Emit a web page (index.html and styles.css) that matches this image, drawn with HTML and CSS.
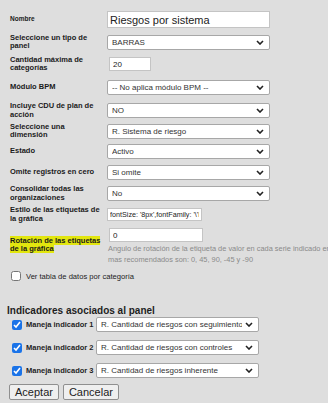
FILE: index.html
```html
<!DOCTYPE html>
<html lang="es">
<head>
  <meta charset="UTF-8">
  <meta name="viewport" content="width=device-width, initial-scale=1.0">
  <title>Panel</title>
  <link rel="stylesheet" href="styles.css">
</head>
<body>

  <form class="panel-form">
    <div class="fields">
      <label class="field-label label-tiny" for="nombre">Nombre</label>
      <div class="field-control"><input type="text" id="nombre" class="txt txt-name" value="Riesgos por sistema"></div>

      <label class="field-label" for="tipo">Seleccione un tipo de panel</label>
      <div class="field-control">
        <select id="tipo" class="sel"><option>BARRAS</option></select>
      </div>

      <label class="field-label" for="cantidad">Cantidad máxima de categorías</label>
      <div class="field-control"><input type="text" id="cantidad" class="txt txt-small" value="20"></div>

      <label class="field-label" for="bpm">Módulo BPM</label>
      <div class="field-control">
        <select id="bpm" class="sel"><option>-- No aplica módulo BPM --</option></select>
      </div>

      <label class="field-label" for="cdu">Incluye CDU de plan de acción</label>
      <div class="field-control">
        <select id="cdu" class="sel"><option>NO</option></select>
      </div>

      <label class="field-label" for="dimension">Seleccione una dimensión</label>
      <div class="field-control">
        <select id="dimension" class="sel"><option>R. Sistema de riesgo</option></select>
      </div>

      <label class="field-label" for="estado">Estado</label>
      <div class="field-control">
        <select id="estado" class="sel"><option>Activo</option></select>
      </div>

      <label class="field-label" for="omite">Omite registros en cero</label>
      <div class="field-control">
        <select id="omite" class="sel"><option>Si omite</option></select>
      </div>

      <label class="field-label" for="consolidar">Consolidar todas las organizaciones</label>
      <div class="field-control">
        <select id="consolidar" class="sel"><option>No</option></select>
      </div>

      <label class="field-label" for="estilo">Estilo de las etiquetas de la gráfica</label>
      <div class="field-control"><input type="text" id="estilo" class="txt txt-style" value="fontSize: '8px',fontFamily: '\'Liberation Sans\''"></div>

      <label class="field-label" for="rotacion"><span class="marked">Rotación de las etiquetas de la gráfica</span></label>
      <div class="field-control">
        <input type="text" id="rotacion" class="txt txt-rotation" value="0">
        <p class="help-text">Angulo de rotación de la etiqueta de valor en cada serie indicado en grados, los valores<br>mas recomendados son: 0, 45, 90, -45 y -90</p>
      </div>
    </div>

    <label class="check-row"><input type="checkbox" class="chk"> Ver tabla de datos por categoría</label>

    <h3 class="section-title">Indicadores asociados al panel</h3>

    <div class="indicator-row">
      <input type="checkbox" class="chk" checked>
      <span class="indicator-label">Maneja indicador 1</span>
      <select class="sel sel-indicator"><option>R. Cantidad de riesgos con seguimiento</option></select>
    </div>
    <div class="indicator-row">
      <input type="checkbox" class="chk" checked>
      <span class="indicator-label">Maneja indicador 2</span>
      <select class="sel sel-indicator"><option>R. Cantidad de riesgos con controles</option></select>
    </div>
    <div class="indicator-row">
      <input type="checkbox" class="chk" checked>
      <span class="indicator-label">Maneja indicador 3</span>
      <select class="sel sel-indicator"><option>R. Cantidad de riesgos inherente</option></select>
    </div>

    <div class="actions">
      <button type="submit" class="btn">Aceptar</button>
      <button type="button" class="btn">Cancelar</button>
    </div>
  </form>

</body>
</html>
```

FILE: styles.css
```css
/* Reset */
* {
  margin: 0;
  padding: 0;
  box-sizing: border-box;
}

html {
  overflow: hidden;
}

body {
  font-family: "Liberation Sans", Arial, sans-serif;
  background: #dedede;
  color: #222;
}

/* Form */
.panel-form {
  padding: 8px 0 0 7px;
}

.fields {
  display: grid;
  grid-template-columns: 100px 1fr;
  grid-template-rows: 23px 22px 22px 25px 21px 20px 21px 21px 21px 21px auto;
  align-items: center;
}

.field-label {
  padding: 0 6px 0 3px;
  font-size: 7.5px;
  font-weight: bold;
  line-height: 8.5px;
  color: #1a1a1a;
}

.label-tiny {
  font-size: 6.5px;
}

.marked {
  background: #e2e60f;
}

/* Text inputs */
.txt {
  display: block;
  height: 14px;
  padding: 0 3px;
  border: 1px solid #c4c4c4;
  background: #fff;
  font-family: inherit;
  font-size: 8px;
  color: #222;
  outline: none;
}

.txt-name {
  width: 163px;
  height: 17px;
  font-size: 11px;
  padding: 0 2px;
}

.txt-small {
  width: 42px;
  margin-left: 2px;
}

.txt-style {
  width: 95px;
  height: 13px;
  padding: 0 2px;
  font-size: 7.2px;
}

.txt-rotation {
  width: 94px;
  margin: 3px 0 0 2px;
}

.help-text {
  margin: 2px 0 0 1px;
  font-size: 7.4px;
  line-height: 10.5px;
  color: #8a8a8a;
  white-space: nowrap;
}

/* Selects */
.sel {
  display: block;
  width: 163px;
  height: 15px;
  padding: 0 16px 0 4px;
  border: 1px solid #a7a7a7;
  border-radius: 2px;
  background: #fff url("data:image/svg+xml;utf8,<svg xmlns='http://www.w3.org/2000/svg' width='8' height='5' viewBox='0 0 8 5'><path d='M1 1l3 3 3-3' fill='none' stroke='%23222' stroke-width='1.6'/></svg>") no-repeat right 5px center;
  -webkit-appearance: none;
  appearance: none;
  font-family: inherit;
  font-size: 8px;
  color: #333;
  outline: none;
}

/* Checkboxes */
.chk {
  width: 10px;
  height: 10px;
  margin: 0;
  accent-color: #1a73e8;
}

.check-row {
  display: flex;
  align-items: center;
  gap: 5px;
  margin: 6px 0 0 4px;
  font-size: 7.6px;
  color: #222;
}

.section-title {
  margin: 24px 0 0 0;
  font-size: 10px;
  font-weight: bold;
  color: #1e1e1e;
}

.indicator-row {
  display: flex;
  align-items: center;
  height: 15px;
  margin-top: 1px;
  padding-left: 5px;
}

.indicator-row + .indicator-row {
  margin-top: 8px;
}

.indicator-label {
  width: 74px;
  padding-left: 4px;
  font-size: 7.5px;
  font-weight: bold;
  color: #1e1e1e;
}

.sel-indicator {
  width: 163px;
}

/* Buttons */
.actions {
  display: flex;
  gap: 4px;
  margin: 6px 0 0 2px;
}

.btn {
  height: 16px;
  padding: 0 5px;
  border: 1px solid #8f8f8f;
  border-radius: 2px;
  background: #efefef;
  font-family: inherit;
  font-size: 11px;
  color: #222;
}
```
